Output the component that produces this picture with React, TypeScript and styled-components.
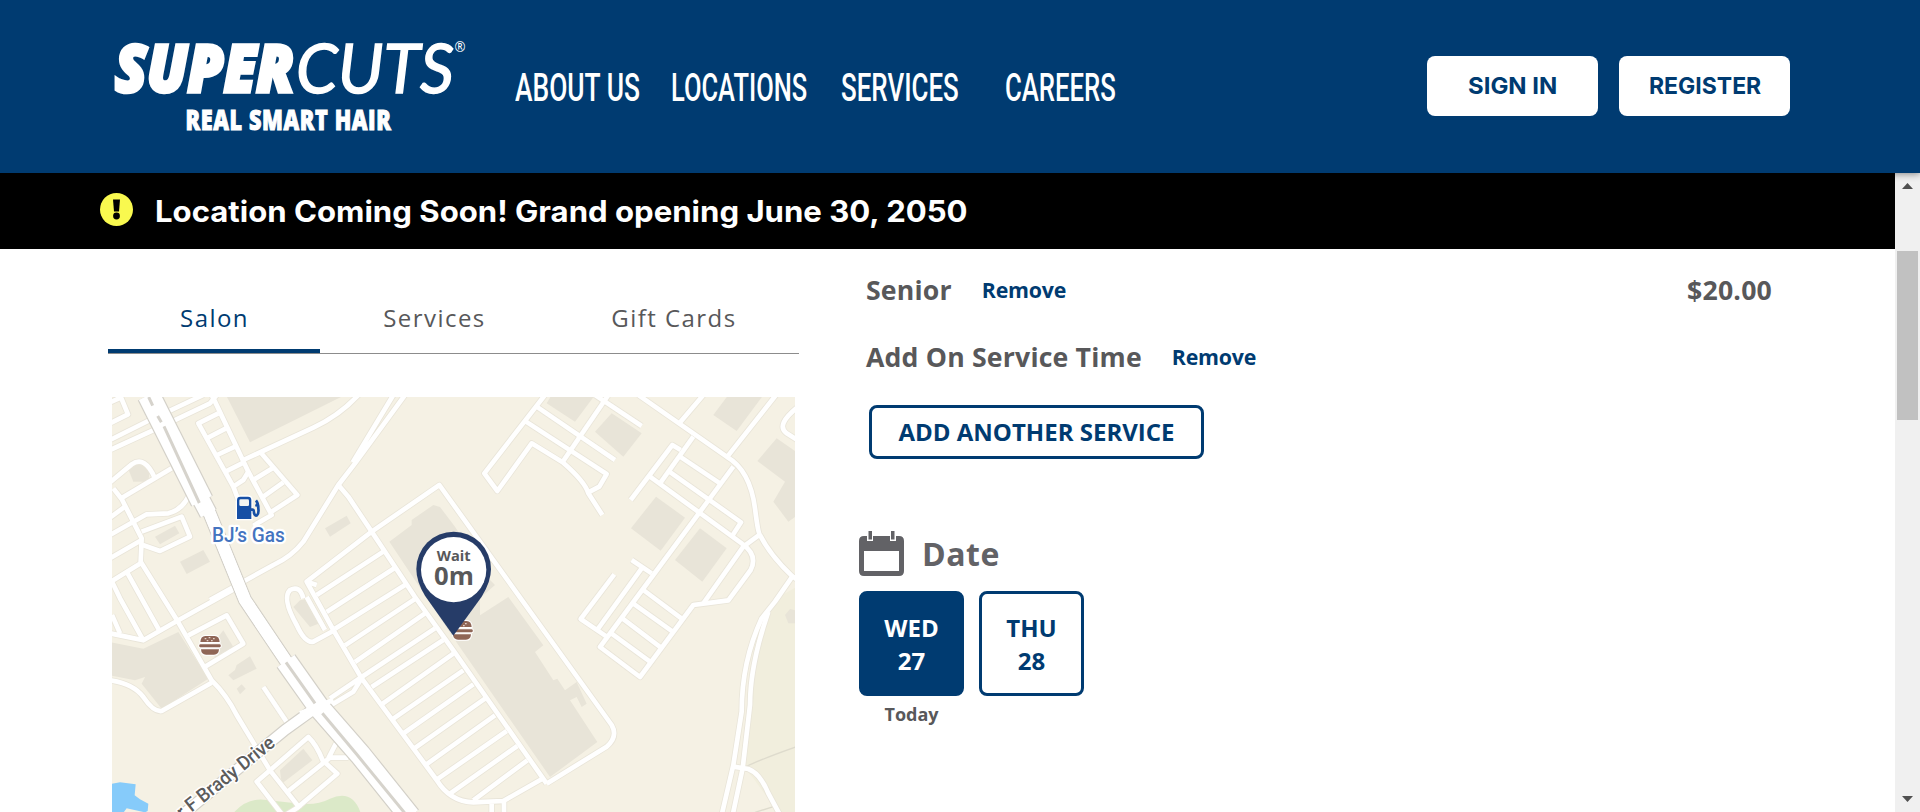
import React, { useLayoutEffect, useRef, useState } from 'react';
import styled, { createGlobalStyle } from 'styled-components';

const navy = '#003b71';
const grey = '#58585a';

const GlobalStyle = createGlobalStyle`
  * { box-sizing: border-box; }
  body { margin: 0; overflow: hidden; background: #fff; font-family: "Open Sans", "Noto Sans", sans-serif; }
  button { font: inherit; cursor: pointer; }
`;

/* Text squeezed or stretched horizontally to a set width */
const FitBox = styled.span<{ $width: number }>`
  display: block;
  flex: none;
  width: ${(p) => p.$width}px;
  text-align: left;
`;
const FitInner = styled.span`
  display: inline-block;
  white-space: nowrap;
  transform-origin: 0 50%;
`;
function FitText({ width, children }: { width: number; children: string }) {
  const ref = useRef<HTMLSpanElement>(null);
  const [scale, setScale] = useState(1);
  useLayoutEffect(() => {
    if (ref.current) setScale(width / ref.current.offsetWidth);
  }, [width, children]);
  return (
    <FitBox $width={width}>
      <FitInner ref={ref} style={{ transform: `scaleX(${scale})` }}>{children}</FitInner>
    </FitBox>
  );
}

const Page = styled.div`
  display: flex;
  flex-direction: column;
  width: 1920px;
  height: 812px;
`;

const Header = styled.header`
  display: flex;
  align-items: flex-start;
  flex: none;
  height: 173px;
  padding: 0 130px 0 113px;
  background: ${navy};
  box-shadow: 0 1px 7px rgba(0, 0, 0, 0.45);
  z-index: 1;
`;
const Logo = styled.svg`
  flex: none;
  width: 356px;
  height: 140px;
  margin-right: 46px;
  fill: #fff;
  stroke: #fff;
  font-family: "Open Sans", sans-serif;
`;
const Nav = styled.nav`
  display: flex;
  flex: 1;
  padding-top: 65px;
  font: 500 38px/46px Roboto, sans-serif;
  color: #fff;
`;
const NavItem = styled.a<{ $gap: number }>`
  margin-right: ${(p) => p.$gap}px;
`;
const AuthButtons = styled.div`
  display: flex;
  gap: 21px;
  padding-top: 56px;
`;
const AuthButton = styled.button`
  display: flex;
  align-items: center;
  justify-content: center;
  width: 171px;
  height: 60px;
  padding: 0;
  border: 0;
  border-radius: 8px;
  background: #fff;
  color: ${navy};
  font: 700 23.4px/60px Inter, sans-serif;
`;

const Body = styled.div`
  display: flex;
  flex: 1;
  min-height: 0;
`;
const Content = styled.div`
  display: flex;
  flex-direction: column;
  flex: 1;
`;
const Banner = styled.div`
  display: flex;
  align-items: center;
  flex: none;
  height: 76px;
  padding: 0 0 3px 100px;
  background: #000;
  color: #fff;
  font: 700 29.5px/40px Inter, sans-serif;
`;
const BannerText = styled.div`
  padding-top: 3px;
`;
const AlertIcon = styled.svg`
  width: 33px;
  height: 33px;
  margin-right: 22px;
`;
const Columns = styled.main`
  display: flex;
  flex: 1;
  min-height: 0;
`;

const SalonColumn = styled.section`
  width: 691px;
  margin-left: 108px;
`;
const Tabs = styled.div`
  display: flex;
  height: 105px;
  border-bottom: 1px solid #8c8c8c;
`;
const Tab = styled.div<{ $width: number; $active?: boolean }>`
  width: ${(p) => p.$width}px;
  padding: 52px 0 0 1px;
  border-bottom: 4px solid ${(p) => (p.$active ? navy : 'transparent')};
  color: ${(p) => (p.$active ? navy : '#58585a')};
  font-size: 24px;
  line-height: 34px;
  letter-spacing: 1.45px;
  text-align: center;
`;
const Map = styled.svg`
  display: block;
  width: 683px;
  height: 415px;
  margin: 43px 0 0 4px;
  background: #f5f1e4;
`;

const Booking = styled.section`
  width: 913px;
  margin-left: 60px;
`;
const ServiceList = styled.div`
  padding: 7px 0 0 7px;
`;
const ServiceRow = styled.div`
  display: flex;
  align-items: center;
  height: 67px;
`;
const ServiceName = styled.span`
  color: ${grey};
  font-size: 26.67px;
  font-weight: 700;
  letter-spacing: 0.18px;
`;
const RemoveLink = styled.a`
  margin-left: 30px;
  color: ${navy};
  font-size: 21.33px;
  font-weight: 700;
  letter-spacing: -0.2px;
`;
const Price = styled(ServiceName)`
  margin-left: auto;
`;
const AddButton = styled.button`
  display: block;
  width: 335px;
  height: 54px;
  margin: 15px 0 0 3px;
  padding: 0;
  border: 3px solid ${navy};
  border-radius: 8px;
  background: #fff;
  color: ${navy};
  font-size: 24px;
  font-weight: 700;
  line-height: 48px;
`;
const DateHeading = styled.h2`
  display: flex;
  align-items: center;
  height: 45px;
  margin: 72px 0 15px;
  gap: 18px;
  color: #626266;
  font-size: 32px;
  font-weight: 700;
  letter-spacing: 0.5px;
  line-height: 43px;
`;
const HeadingText = styled.span`
  padding-bottom: 1px;
`;
const Days = styled.div`
  display: flex;
  gap: 15px;
`;
const Day = styled.div`
  width: 105px;
  text-align: center;
`;
const DayBox = styled.div<{ $selected?: boolean }>`
  height: 105px;
  padding-top: 17px;
  border: 3px solid ${navy};
  border-radius: 8px;
  background: ${(p) => (p.$selected ? navy : '#fff')};
  color: ${(p) => (p.$selected ? '#fff' : navy)};
  font-size: 24px;
  font-weight: 700;
  line-height: 33px;
`;
const DayNote = styled.div`
  padding-top: 5px;
  color: ${grey};
  font-size: 18px;
  font-weight: 700;
  line-height: 26px;
`;

const Scrollbar = styled.div`
  display: flex;
  flex-direction: column;
  align-items: center;
  width: 25px;
  padding: 10px 0;
  background: #f0f0f0;
`;
const Arrow = styled.svg`
  width: 11px;
  height: 6px;
  fill: #505050;
`;
const Thumb = styled.div`
  width: 21px;
  height: 169px;
  margin: 62px 0 auto;
  background: #c1c1c1;
`;

type Part = { x: number; y: number; roads: string[]; buildings: string[] };

const parts: Part[] = [
  {
    x: 0,
    y: 0,
    roads: [
      'M60 30L84 88L30 115', 'M30 52L62 38', 'M30 165L150 105L310 30', 'M30 195L190 122L330 55L350 30',
      'M335 30L345 50L445 260L515 390L460 422', 'M355 85L295 115L400 305L415 345',
      'M320 160L378 130M345 213L405 185M372 262L432 232', 'M445 260L430 285L400 305',
      'M430 225L640 128Q720 90 775 30', 'M480 200L592 330L515 380', 'M460 285L520 248M490 335L550 292',
      'M880 30L758 232M915 30L765 235L715 300L610 470Q575 515 520 540L330 645',
      'M715 300L745 335L815 440L945 636L1060 796L1340 1196',
      'M815 440L1018 300L1535 1020Q1555 1055 1520 1085L1340 1196',
      'M815 440L620 590L700 735L785 880L1010 1185Q1050 1250 1120 1252L1210 1248L1330 1180',
      'M650 630L850 500M680 681L883 550M705 731L915 600M735 781L948 640M765 831L975 685M785 876L1005 730M815 906L1030 765M848 956L1060 806M880 1001L1090 856M912 1044L1120 898M942 1091L1155 941M975 1141L1185 991M1010 1184L1220 1038M1050 1226L1252 1083M1120 1246L1282 1126',
      'M610 640Q600 600 570 615Q545 640 590 720Q615 775 640 770L705 735', 'M620 636L675 735M650 600L620 590',
      'M690 940L785 876M690 962L760 920L785 880',
      'M30 292L95 238Q135 210 165 280', 'M60 342L215 250', 'M40 310L65 342L125 460L122 530L235 712L335 886Q380 930 410 990L510 1156L600 1270',
      'M30 398L75 365M30 450L140 388L205 385Q245 375 265 335', 'M125 440L245 395L270 455L180 498L128 480', 'M30 520L125 465M30 592L122 535',
      'M36 590L60 640L130 766M80 560L180 740M36 690L60 745', 'M30 745L130 766L235 706L425 600',
      'M265 751L380 691L430 776L315 845', 'M30 886Q100 896 130 936Q160 981 185 978L335 893', 'M490 906L565 1018',
      'M510 1156L470 1190L555 1300', 'M510 1156L625 1056Q650 1080 668 1126L712 1166L590 1270L540 1300', 'M565 1218L690 1118L745 1118M685 1120L708 1075',
      'M1175 1256V1290M1212 1250V1290',
    ],
    buildings: [
      'M378 30L735 30L450 172Z', 'M80 240L100 225L150 250L145 290L100 290Z', 'M165 455L225 422L238 445L180 478Z',
      'M240 530L310 495L330 530L260 567Z', 'M675 430L740 392L752 415L690 455Z',
      'M868 470L935 420L935 405L1000 360L1020 366L1065 425L1165 580L1185 600L1140 640L1140 691L1225 636L1330 781L1305 801L1360 886L1372 881L1395 916L1430 891L1460 956L1445 966L1430 936L1410 946L1492 1071L1350 1176L1075 780Z',
      'M30 771L130 791L235 741L325 881L185 971L125 896L135 876L105 886L30 871Z', 'M370 736L400 786L345 816L330 786Z',
      'M385 871L405 855L410 840L450 814L470 851L400 886Z', 'M410 911L425 898L437 911L420 928Z', 'M540 1156L610 1091L637 1126L545 1196Z', 'M580 666L600 646L625 641L655 716L630 726Z',
    ],
  },
  {
    x: 1020,
    y: 0,
    roads: [
      'M315 30L133 265L172 318L275 175L368 232Q435 290 445 325L487 390', 'M290 65L525 225', 'M258 110L500 267L478 305L445 322',
      'M505 30L365 235', 'M465 30L605 123', 'M595 30L860 215Q930 255 945 370Q955 450 960 450Q990 510 1055 572L1080 590',
      'M790 30L718 115M1008 30L862 215', 'M1075 65Q1005 120 1040 145L1080 170', 'M760 155L660 295', 'M572 345L697 180L722 195',
      'M720 215L840 295', 'M688 260L903 412L875 455', 'M630 275L905 475Q955 510 932 555L865 646L760 660L600 876L480 786L640 570L880 245',
      'M910 485L790 655M960 448L910 485', 'M575 525L635 565M605 550L475 730M523 568L422 702L500 755',
      'M610 615L728 703M580 656L698 740M548 701L663 788M515 746L630 830',
      'M1060 570L1005 650L965 700Q905 830 905 980L880 1140L845 1290', 'M985 680Q930 840 930 960L908 1150L878 1290', 'M880 1145L925 1152Q960 1165 985 1225L1020 1290',
    ],
    buildings: [
      'M335 30L465 30L405 110L320 55Z', 'M465 140L515 85L605 145L550 215Z', 'M820 90L865 30L970 30L890 138Z',
      'M952 228L1010 160L1080 208L1080 385L1045 410L1000 350L1035 290Z', 'M573 430L648 335L735 398L662 497Z', 'M705 525L780 430L860 490L787 590Z',
      'M1035 690L1050 672L1080 680L1080 715L1045 715Z',
    ],
  },
];

function Burger({ x, y }: { x: number; y: number }) {
  return (
    <g transform={`translate(${x} ${y})`}>
      <g fill="#8f6656" stroke="#fff" strokeWidth="6" paintOrder="stroke" strokeLinejoin="round">
        <path d="M-29 -10Q-28 -28 -14 -28H14Q28 -28 29 -10Z" />
        <rect x="-32" y="-3" width="64" height="9" rx="3" />
        <path d="M-27 12H27Q26 28 12 28H-12Q-26 28 -27 12Z" />
      </g>
      <path d="M-16 -20h5M-4 -23h5M9 -20h5M-10 -14h5M3 -14h5" stroke="#e2cfc7" strokeWidth="4" />
    </g>
  );
}

const mainRoad = 'M325 375L435 645L558 828';
const boulevard = 'M558 828L655 965L780 1108L930 1295';

function SalonMap() {
  return (
    <Map viewBox="36 36 2049 1245" preserveAspectRatio="none">
      <path d="M2100 600L2030 640L1985 720Q1945 860 1945 980L1925 1140L1960 1180L2040 1290H2100Z" fill="#f1eedd" />
      <path d="M395 1290Q440 1235 500 1245L600 1256Q650 1262 690 1241Q760 1210 784 1290Z" fill="#dbe9c8" />
      <path d="M30 1197L60 1192L107 1198L104 1231L120 1243L145 1256L143 1278L135 1282L80 1270L65 1290H30Z" fill="#86cbfa" />
      {parts.map((p) => (
        <g key={p.x} transform={`translate(${p.x} ${p.y})`} fill="#e8e4d8">
          {p.buildings.map((d) => <path key={d} d={d} />)}
        </g>
      ))}
      <path d="M1935 1146Q1990 1120 2090 1085M1965 1282L2030 1262" fill="none" stroke="#dedbcd" strokeWidth="4" />
      {[{ c: '#e9e5d9', w: 19 }, { c: '#fff', w: 14 }].map((layer) => (
        <g key={layer.c} fill="none" stroke={layer.c} strokeLinejoin="round">
          {parts.map((p) => (
            <g key={p.x} transform={`translate(${p.x} ${p.y})`} strokeWidth={layer.w}>
              {p.roads.map((d) => <path key={d} d={d} />)}
            </g>
          ))}
        </g>
      ))}
      {[{ c: '#d3d0c8', extra: 7 }, { c: '#fff', extra: 0 }].map((layer) => (
        <g key={layer.c} fill="none" stroke={layer.c} strokeLinejoin="round">
          <path d="M146 30L306 348" strokeWidth={66 + layer.extra} />
          <path d="M296 330L325 385" strokeWidth={50 + layer.extra} />
          <path d={mainRoad} strokeWidth={36 + layer.extra} />
          <path d={boulevard} strokeWidth={62 + layer.extra} />
          <path d="M645 970L555 1035L210 1320" strokeWidth={30 + layer.extra} />
        </g>
      ))}
      <path d={mainRoad} fill="none" stroke="#fff" strokeWidth="36" strokeLinecap="round" />
      <g fill="none" stroke="#d6d3cc" strokeWidth="9">
        <path d="M146 36L158 62M173 93L184 112M192 124L298 354" />
        <path d="M558 832L645 955M667 985L770 1108L915 1285" />
      </g>
      <path d="M600 985L700 945" stroke="#fff" strokeWidth="14" />
      <g>
        <path d="M411 402V345Q411 335 421 335H444Q454 335 454 345V402Z" fill="#164fa5" stroke="#fff" strokeWidth="8" paintOrder="stroke" />
        <rect x="418" y="343" width="29" height="20" rx="4" fill="#f4f5f2" />
        <path d="M453 374H458Q462 374 462 384Q465 394 471 391Q477 386 475 370Q475 354 468 346M466 360L474 362" fill="none" stroke="#164fa5" strokeWidth="8" />
      </g>
      <text x="336" y="470" textLength="218" lengthAdjust="spacingAndGlyphs" fill="#4474c0" stroke="#fff" strokeWidth="14" strokeLinejoin="round" paintOrder="stroke" fontFamily="Roboto" fontWeight="500" fontSize="60">BJ’s Gas</text>
      <text transform="translate(258 1296) rotate(-38.5)" x="-12" y="0" textLength="358" lengthAdjust="spacingAndGlyphs" fill="#5c5c5c" stroke="#fff" strokeWidth="9" strokeLinejoin="round" paintOrder="stroke" fontFamily="Roboto" fontWeight="500" fontSize="58">r F Brady Drive</text>
      <Burger x={330} y={781} />
      <Burger x={1086} y={736} />
      <path d="M1060 752L975 632Q949 590 949 552A112 112 0 0 1 1173 552Q1173 590 1145 635Z" fill="#263c68" />
      <circle cx="1061" cy="554" r="98" fill="#fff" />
      <g fill={grey} textAnchor="middle" fontFamily="Open Sans" fontWeight="700">
        <text x="1061" y="527" fontSize="44">Wait</text>
        <text x="1062" y="600" fontSize="77">0m</text>
      </g>
    </Map>
  );
}

const navItems = [
  { label: 'ABOUT US', width: 125, gap: 31 },
  { label: 'LOCATIONS', width: 136, gap: 34 },
  { label: 'SERVICES', width: 118, gap: 46 },
  { label: 'CAREERS', width: 111, gap: 0 },
];

export default function App() {
  return (
    <Page>
      <GlobalStyle />
      <Header>
        <Logo viewBox="113 0 356 140">
          <text x="115" y="91.7" fontSize="65" fontWeight="800" fontStyle="italic" textLength="179" lengthAdjust="spacingAndGlyphs" strokeWidth="3.6">SUPER</text>
          <text x="296" y="92.5" fontFamily="Lato" fontSize="67" fontWeight="400" fontStyle="italic" textLength="158" lengthAdjust="spacingAndGlyphs" strokeWidth="1.4">CUTS</text>
          <text x="454.5" y="52" fontSize="14" textLength="11" lengthAdjust="spacingAndGlyphs" stroke="none">®</text>
          <text x="185.5" y="130" fontSize="27.6" fontWeight="800" textLength="206" lengthAdjust="spacingAndGlyphs" strokeWidth="1" letterSpacing="0.8">REAL SMART HAIR</text>
        </Logo>
        <Nav>
          {navItems.map((n) => (
            <NavItem key={n.label} $gap={n.gap}><FitText width={n.width}>{n.label}</FitText></NavItem>
          ))}
        </Nav>
        <AuthButtons>
          <AuthButton><FitText width={89}>SIGN IN</FitText></AuthButton>
          <AuthButton><FitText width={112}>REGISTER</FitText></AuthButton>
        </AuthButtons>
      </Header>
      <Body>
        <Content>
          <Banner>
            <AlertIcon viewBox="0 0 33 33">
              <circle cx="16.5" cy="16.5" r="16.5" fill="#f9f94f" />
              <path d="M13 6.5H20L19 18.5H14Z" fill="#000" />
              <circle cx="16.5" cy="23" r="3.4" fill="#000" />
            </AlertIcon>
            <BannerText><FitText width={813}>Location Coming Soon! Grand opening June 30, 2050</FitText></BannerText>
          </Banner>
          <Columns>
            <SalonColumn>
              <Tabs>
                <Tab $width={212} $active>Salon</Tab>
                <Tab $width={228}>Services</Tab>
                <Tab $width={251}>Gift Cards</Tab>
              </Tabs>
              <SalonMap />
            </SalonColumn>
            <Booking>
              <ServiceList>
                <ServiceRow>
                  <ServiceName>Senior</ServiceName>
                  <RemoveLink>Remove</RemoveLink>
                  <Price>$20.00</Price>
                </ServiceRow>
                <ServiceRow>
                  <ServiceName>Add On Service Time</ServiceName>
                  <RemoveLink>Remove</RemoveLink>
                </ServiceRow>
                <AddButton>ADD ANOTHER SERVICE</AddButton>
              </ServiceList>
              <DateHeading>
                <svg width="45" height="45" viewBox="0 0 45 45">
                  <path fillRule="evenodd" d="M5 5H8V10H14V5H31V10H37V5H40Q45 5 45 10V40Q45 45 40 45H5Q0 45 0 40V10Q0 5 5 5ZM5 20V40H40V20Z" fill="#626266" />
                  <path d="M9.5 0H13V8.5H9.5ZM32 0H35.5V8.5H32Z" fill="#626266" />
                </svg>
                <HeadingText>Date</HeadingText>
              </DateHeading>
              <Days>
                <Day>
                  <DayBox $selected>WED<br />27</DayBox>
                  <DayNote>Today</DayNote>
                </Day>
                <Day>
                  <DayBox>THU<br />28</DayBox>
                </Day>
              </Days>
            </Booking>
          </Columns>
        </Content>
        <Scrollbar>
          <Arrow viewBox="0 0 11 6"><path d="M0 6L5.5 0L11 6Z" /></Arrow>
          <Thumb />
          <Arrow viewBox="0 0 11 6"><path d="M0 0L5.5 6L11 0Z" /></Arrow>
        </Scrollbar>
      </Body>
    </Page>
  );
}
